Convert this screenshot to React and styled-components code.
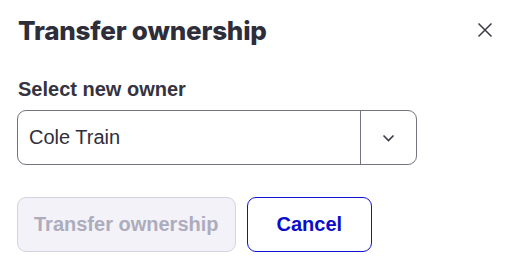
import React from 'react';
import styled, { createGlobalStyle } from 'styled-components';

const Global = createGlobalStyle`
  html, body { margin: 0; padding: 0; background: #fff; }
  * { box-sizing: border-box; }
`

const Dialog = styled.div`
  width: 517px;
  height: 267px;
  padding: 15px 18px 0 17px;
  font-family: "Liberation Sans", Arial, sans-serif;
  color: #2f2e3b;
`
const Header = styled.div`
  display: flex;
  justify-content: space-between;
  align-items: center;
  height: 30px;
`
const Title = styled.h2`
  margin: 0 0 0 1px;
  font-family: Inter, "Noto Sans", sans-serif;
  font-weight: 800;
  font-size: 26px;
  letter-spacing: -0.2px;
  color: #2e2d3a;
`
const Close = styled.button`
  border: 0;
  background: none;
  padding: 0;
  width: 20px;
  height: 20px;
  display: flex;
  align-items: center;
  justify-content: center;
  margin-right: 4px;
  color: #3b3a48;
`
const Label = styled.div`
  margin-top: 33px;
  margin-left: 1px;
  font-size: 20px;
  font-weight: bold;
  color: #34333f;
`
const Select = styled.div`
  margin-top: 9px;
  width: 400px;
  height: 55px;
  border: 1px solid #74737f;
  border-radius: 9px;
  display: flex;
  align-items: stretch;
`
const Value = styled.div`
  flex: 1;
  display: flex;
  align-items: center;
  padding-left: 11px;
  font-size: 20px;
  color: #2f2e3b;
`
const Toggle = styled.div`
  width: 56px;
  border-left: 1px solid #74737f;
  display: flex;
  align-items: center;
  justify-content: center;
  color: #3b3a48;
`
const Actions = styled.div`
  margin-top: 32px;
  display: flex;
  gap: 11px;
`
const Button = styled.button`
  height: 55px;
  padding: 0 ${p => p.$pad}px;
  border-radius: 9px;
  font-family: "Liberation Sans", Arial, sans-serif;
  font-weight: bold;
  font-size: 20px;
  border: 1px solid ${p => p.$primary ? '#d4d3e1' : '#1010d0'};
  background: ${p => p.$primary ? '#f3f2f8' : '#fff'};
  color: ${p => p.$primary ? '#adacbd' : '#0b0bcc'};
`

export default function App() {
  return (
    <Dialog>
      <Global />
      <Header>
        <Title>Transfer ownership</Title>
        <Close aria-label="Close">
          <svg width="16" height="16" viewBox="0 0 16 16" fill="none" stroke="currentColor" strokeWidth="1.5">
            <path d="M1.5 1.5l13 13M14.5 1.5l-13 13" />
          </svg>
        </Close>
      </Header>
      <Label>Select new owner</Label>
      <Select>
        <Value>Cole Train</Value>
        <Toggle>
          <svg width="13" height="8" viewBox="0 0 13 8" fill="none" stroke="currentColor" strokeWidth="1.6">
            <path d="M1.5 1.5l5 5 5-5" />
          </svg>
        </Toggle>
      </Select>
      <Actions>
        <Button $primary $pad={16} disabled>Transfer ownership</Button>
        <Button $pad={29}>Cancel</Button>
      </Actions>
    </Dialog>
  );
}
